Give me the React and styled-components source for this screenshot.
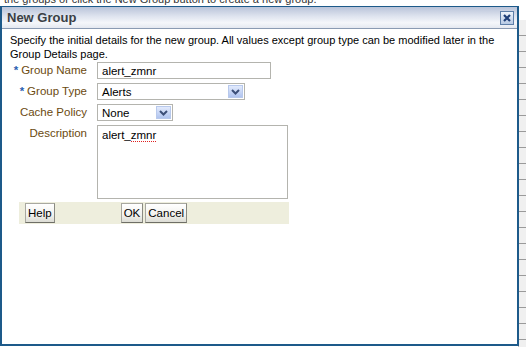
import React from "react";
import styled, { createGlobalStyle } from "styled-components";

const Global = createGlobalStyle`
  html, body {
    margin: 0;
    padding: 0;
    background: #fff;
    overflow: hidden;
  }
  body {
    font-family: Tahoma, "Liberation Sans", Arial, sans-serif;
  }
`;

const Page = styled.div`
  position: relative;
  width: 526px;
  height: 347px;
  overflow: hidden;
  background: #fff;
`;

const PageHint = styled.p`
  margin: -7px 0 0 4px;
  font-size: 11px;
  color: #333;
  white-space: nowrap;
`;

const SideStrip = styled.div`
  position: absolute;
  top: 20px;
  right: 0;
  width: 7px;
  bottom: 0;
  background: repeating-linear-gradient(
    to bottom,
    #f0f0f0 0px,
    #f0f0f0 15px,
    #9a9a9a 15px,
    #9a9a9a 16px
  );
  border-left: 1px solid #b8b8b8;
`;

const Dialog = styled.div`
  position: absolute;
  left: 0;
  top: 6px;
  width: 515px;
  height: 337px;
  border: 2px solid #1d5a8a;
  border-top-width: 1px;
  background: #fff;
  display: flex;
  flex-direction: column;
`;

const TitleBar = styled.div`
  height: 21px;
  display: flex;
  align-items: center;
  justify-content: space-between;
  padding: 0 2px 0 5px;
  background: linear-gradient(to bottom, #b9c3d9 0%, #dfe4ef 45%, #f4f6fa 75%, #e4e8f0 100%);
  border-bottom: 1px solid #8a9ab2;
`;

const Title = styled.span`
  font-family: "Liberation Sans", Arial, sans-serif;
  font-weight: bold;
  font-size: 13px;
  color: #3a3f45;
`;

const CloseButton = styled.div`
  width: 12px;
  height: 12px;
  border: 1px solid #5d7ea8;
  background: linear-gradient(to bottom, #eef3fb, #b7c9e4);
  display: flex;
  align-items: center;
  justify-content: center;
  margin-right: 1px;
`;

const Body = styled.div`
  padding: 4px 8px 0 8px;
  font-size: 11px;
  color: #000;
`;

const Intro = styled.p`
  margin: 0 0 1px 0;
  line-height: 14px;
  width: 500px;
`;

const Form = styled.div`
  display: grid;
  grid-template-columns: 77px auto;
  column-gap: 10px;
  row-gap: 4px;
  align-items: start;
`;

const Label = styled.label`
  text-align: right;
  color: #6b4a10;
  font-size: 11.5px;
  line-height: 17px;
  white-space: nowrap;
`;

const Required = styled.span`
  color: #2a5fb0;
  font-weight: bold;
  margin-right: 3px;
`;

const TextBox = styled.div`
  width: ${(p) => p.w}px;
  height: ${(p) => p.h}px;
  box-sizing: border-box;
  border: 1px solid #b4b4ae;
  padding: ${(p) => (p.multi ? "3px 4px" : "0 4px")};
  line-height: ${(p) => (p.multi ? "13px" : "16px")};
  font-size: 11.5px;
  color: #000;
`;

const SelectBox = styled.div`
  width: ${(p) => p.w}px;
  height: 17px;
  box-sizing: border-box;
  border: 1px solid #b4b4ae;
  display: flex;
  align-items: center;
  justify-content: space-between;
  padding: 0 1px 0 4px;
  font-size: 11.5px;
`;

const DropButton = styled.span`
  width: 15px;
  height: 13px;
  background: linear-gradient(to bottom, #e2eafc, #b0c4ef);
  border: 1px solid #b8c9ec;
  box-sizing: border-box;
  display: flex;
  align-items: center;
  justify-content: center;
`;

const Misspelled = styled.span`
  border-bottom: 1px dotted #e02020;
`;

const ButtonBar = styled.div`
  margin: 3px 0 0 9px;
  width: 270px;
  height: 22px;
  box-sizing: border-box;
  background: #eeeedd;
  display: flex;
  align-items: center;
  padding: 0 6px;
`;

const Button = styled.button`
  height: 20px;
  box-sizing: border-box;
  padding: 0 2px;
  margin: 0;
  margin-left: ${(p) => p.ml || 0}px;
  font-family: inherit;
  font-size: 11.5px;
  color: #000;
  border: 1px solid #a8a8a0;
  border-bottom-color: #6e6e66;
  border-right-color: #8a8a82;
  border-radius: 0;
  background: linear-gradient(to bottom, #ffffff 0%, #f2f2ee 60%, #dcdcd4 100%);
`;

const Chevron = () => (
  <svg width="9" height="6" viewBox="0 0 9 6">
    <path d="M1 1 L4.5 4.5 L8 1" stroke="#3c4f78" strokeWidth="2" fill="none" />
  </svg>
);

const CloseX = () => (
  <svg width="8" height="8" viewBox="0 0 8 8">
    <path d="M1 1 L7 7 M7 1 L1 7" stroke="#1f3f78" strokeWidth="2.2" />
  </svg>
);

const App = () => {
  return (
    <Page>
      <Global />
      <PageHint>
        the groups or click the New Group button to create a new group.
      </PageHint>
      <SideStrip />
      <Dialog>
        <TitleBar>
          <Title>New Group</Title>
          <CloseButton>
            <CloseX />
          </CloseButton>
        </TitleBar>
        <Body>
          <Intro>
            Specify the initial details for the new group. All values except
            group type can be modified later in the Group Details page.
          </Intro>
          <Form>
            <Label>
              <Required>*</Required>Group Name
            </Label>
            <TextBox w={174} h={17}>
              alert_zmnr
            </TextBox>
            <Label>
              <Required>*</Required>Group Type
            </Label>
            <SelectBox w={148}>
              Alerts
              <DropButton>
                <Chevron />
              </DropButton>
            </SelectBox>
            <Label>Cache Policy</Label>
            <SelectBox w={76}>
              None
              <DropButton>
                <Chevron />
              </DropButton>
            </SelectBox>
            <Label>Description</Label>
            <TextBox w={191} h={74} multi>
              alert_<Misspelled>zmnr</Misspelled>
            </TextBox>
          </Form>
          <ButtonBar>
            <Button>Help</Button>
            <Button ml={66}>OK</Button>
            <Button ml={2}>Cancel</Button>
          </ButtonBar>
        </Body>
      </Dialog>
    </Page>
  );
};

export default App;
